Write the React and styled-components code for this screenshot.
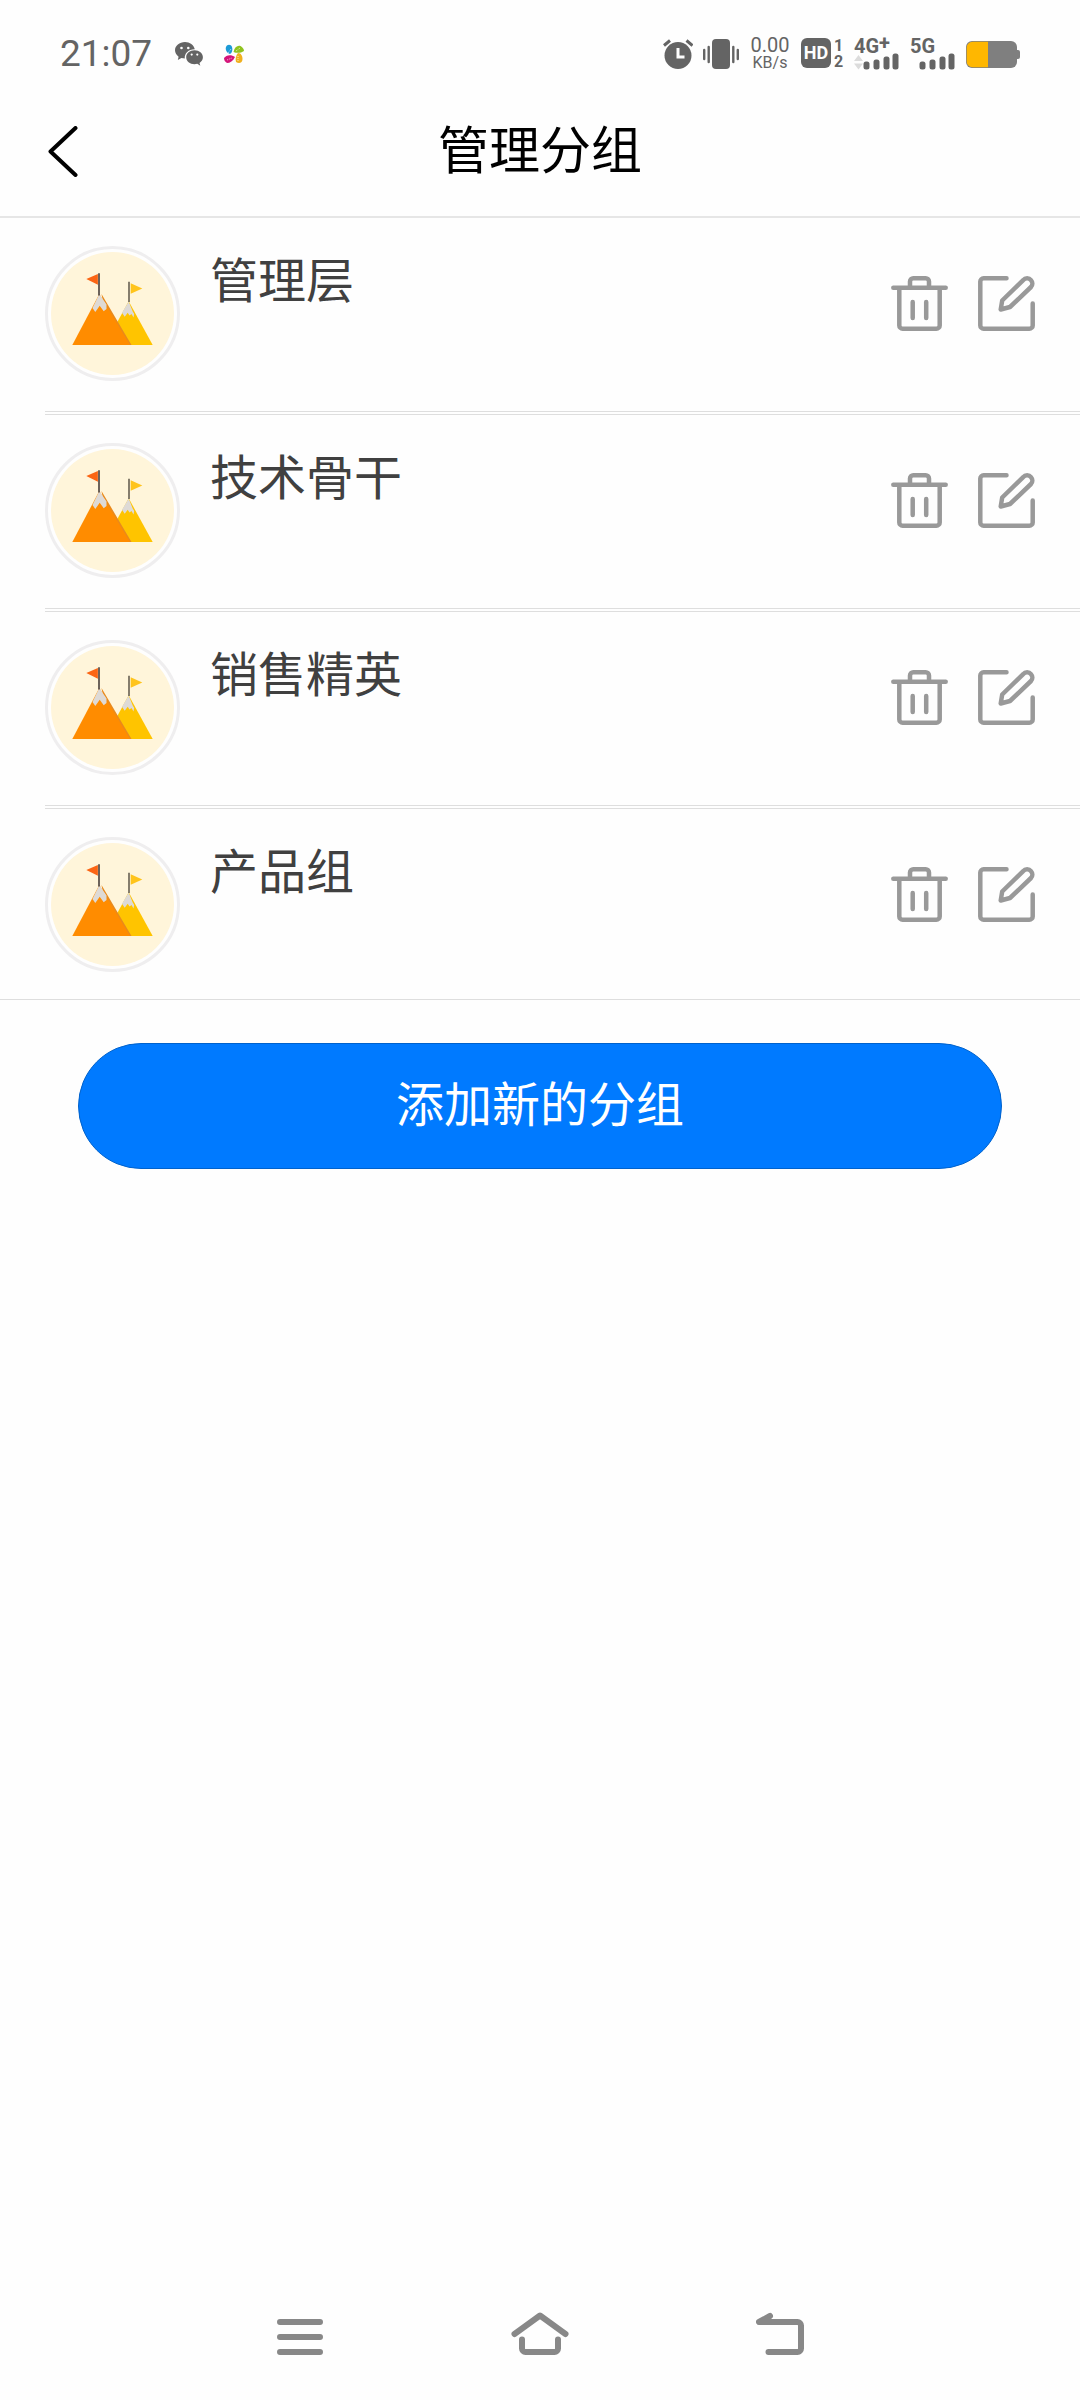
import { useState } from 'react'
import styled, { createGlobalStyle } from 'styled-components'

const GlobalStyle = createGlobalStyle`
  * { box-sizing: border-box; }
  body {
    margin: 0;
    background: #fefefe;
    font-family: "Noto Sans CJK SC", sans-serif;
  }
  button {
    padding: 0;
    border: none;
    background: none;
    font: inherit;
    cursor: pointer;
  }
  svg { display: block; }
`;

const initialGroups = ['管理层', '技术骨干', '销售精英', '产品组']

function WechatIcon() {
    return (
        <svg width="28" height="24" viewBox="0 0 28 24" fill="#646464">
            <path d="M10 0C4.400 0 0 3.700 0 8.300c0 2.600 1.400 4.800 3.600 6.400L2.800 18l3.600-1.900c1.200.3 2.200.5 3.400.5C9.200 11 14 7 19.800 7.200 18.800 3 14.800 0 10 0z" />
            <path d="M19.500 8.200c-4.700 0-8.300 3.100-8.300 7 0 4 3.600 7 8.300 7 1 0 1.900-.1 2.800-.4l3 1.900-.8-2.800c2.100-1.300 3.400-3.400 3.400-5.700 0-3.900-3.700-7-8.400-7z" />
            <g fill="#fefefe">
                <circle cx="6.500" cy="6" r="1.300" />
                <circle cx="13.300" cy="6" r="1.300" />
                <circle cx="16.700" cy="12.600" r="1.100" />
                <circle cx="22.300" cy="12.600" r="1.100" />
            </g>
        </svg>
    )
}

function PetalsIcon() {
    return (
        <svg width="20" height="20" viewBox="0 0 20 20">
            <path d="M2 3c1-3 5-3 6 0 1 3 0 6-2 7-3-1-5-4-4-7z" fill="#1c9ad6" />
            <path d="M9.500 8c1-5 4-7 7-6 2 1 3.500 3 3.500 5-3 2-7 2.500-10.500 1z" fill="#8fc31f" />
            <path d="M0 14c2-3 7-4 11-1-2 4-5 6-8 6-2-1-3-3-3-5z" fill="#d4147a" />
            <path d="M14 9c3 0 4.500 3 4.500 6 0 4-3.500 5-6.500 3-1-3 0-7 2-9z" fill="#f0b01e" />
            <path d="M4 9l3-4M12 7l4-3M3 16l5-2M14 17l0-5" stroke="#fff" strokeWidth="0.700" strokeDasharray="1 1" />
        </svg>
    )
}

function AlarmIcon() {
    return (
        <svg width="30" height="30" viewBox="0 0 30 30">
            <circle cx="15" cy="16.500" r="13.500" fill="#646464" />
            <path d="M1 6.500L7 1.500M23.500 1.500l6 5" stroke="#646464" strokeWidth="3" />
            <path d="M15 9v9h6.500" fill="none" stroke="#fefefe" strokeWidth="3" />
        </svg>
    )
}

function VibrateIcon() {
    return (
        <svg width="36" height="30" viewBox="0 0 36 30">
            <rect x="9" width="18" height="30" rx="4" fill="#646464" />
            <path d="M1.200 11v9M5.700 8v15M30.300 8v15M34.800 11v9" stroke="#646464" strokeWidth="2.400" strokeLinecap="round" />
        </svg>
    )
}

function SignalBars({ arrows }) {
    return (
        <svg width="46" height="17" viewBox="0 0 46 17" fill="#646464">
            {arrows && <path d="M0 8l4.500-6L9 8zM0 10.500h9l-4.500 6z" fill="#dcdcdc" />}
            <rect x="9.500" y="8.500" width="6" height="8" rx="2.500" />
            <rect x="19.500" y="6.500" width="6" height="10" rx="2.500" />
            <rect x="29.500" y="3.500" width="6" height="13" rx="2.500" />
            <rect x="38.500" y="0.500" width="6" height="16" rx="2.500" />
        </svg>
    )
}

function BatteryIcon() {
    return (
        <svg width="54" height="27" viewBox="0 0 54 27">
            <rect width="51" height="27" rx="6" fill="#7f7f7f" />
            <path d="M51 9h1a2 2 0 0 1 2 2v5a2 2 0 0 1-2 2h-1z" fill="#7f7f7f" />
            <path d="M22 .7H6.500A5.800 5.800 0 0 0 .7 6.500v14a5.800 5.800 0 0 0 5.800 5.800H22z" fill="#ffb700" />
        </svg>
    )
}

function MountainIcon() {
    return (
        <svg width="123" height="123" viewBox="0 0 123 123">
            <path d="M77.700 49.300L101.700 93h-48z" fill="#ffc400" />
            <path d="M77.700 49.500L71 60.700l2.700 4 3-4 1.800 2.800 2 -1.500 2 3.500.7-3.500-1.500-2.500z" fill="#dedad6" />
            <path d="M50.500 42l30 51H60z" fill="#e98a1c" />
            <path d="M48.300 42L21.300 93H79z" fill="#ff8c00" />
            <path d="M48.300 42L41.500 56l2.800 4 4.400-6.300 4 5.600 2.800-2.300V52.500z" fill="#dedad6" />
            <path d="M48 43.500V21.300" stroke="#3b3230" strokeWidth="1.500" />
            <path d="M78 50V29.700" stroke="#5c5448" strokeWidth="1.500" />
            <path d="M46.900 22v10.700L35.300 27z" fill="#fb6514" />
            <path d="M79.700 31.300v10.400l11.600-5.200z" fill="#ffc41c" />
        </svg>
    )
}

function TrashIcon() {
    return (
        <svg width="57" height="55" viewBox="0 0 57 55" fill="none" stroke="#999" strokeWidth="4.500" strokeLinecap="round" strokeLinejoin="round">
            <path d="M2.300 11.800h52.400M19 11V5.500A3.300 3.300 0 0 1 22.300 2.300h12.400A3.300 3.300 0 0 1 38 5.500V11M8.300 12.500v36.900a3.300 3.300 0 0 0 3.300 3.300h33.800a3.300 3.300 0 0 0 3.300-3.300V12.500M21.700 26v16M35.200 26v16" />
        </svg>
    )
}

function EditIcon() {
    return (
        <svg width="57" height="55" viewBox="0 0 57 55" fill="none" stroke="#999" strokeWidth="4.500" strokeLinecap="round" strokeLinejoin="round">
            <path d="M28.500 2.300H5.600a3.300 3.300 0 0 0-3.300 3.300v43.800a3.300 3.300 0 0 0 3.300 3.300h45.800a3.300 3.300 0 0 0 3.300-3.300V27.500" />
            <path d="M22.700 33.500L24.200 24.500 45.200 4.200a5 5 0 0 1 7.800 0 5 5 0 0 1 0 6.800L32 31z" />
        </svg>
    )
}

export default function App() {
    const [groups, setGroups] = useState(initialGroups)

    function removeGroup(name) {
        setGroups(groups.filter(group => group !== name))
    }

    return (
        <Page>
            <GlobalStyle />
            <StatusBar>
                <Time>21:07</Time>
                <Notifications>
                    <WechatIcon />
                    <PetalsIcon />
                </Notifications>
                <StatusIcons>
                    <AlarmIcon />
                    <VibrateIcon />
                    <Speed>
                        <SpeedValue>0.00</SpeedValue>
                        <SpeedUnit>KB/s</SpeedUnit>
                    </Speed>
                    <Volte>
                        <HdBadge>HD</HdBadge>
                        <SimNumbers>
                            <span>1</span>
                            <span>2</span>
                        </SimNumbers>
                    </Volte>
                    <Network>
                        <NetworkType>4G<Plus>+</Plus></NetworkType>
                        <SignalBars arrows />
                    </Network>
                    <Network>
                        <NetworkType>5G</NetworkType>
                        <SignalBars />
                    </Network>
                    <BatteryIcon />
                </StatusIcons>
            </StatusBar>
            <Header>
                <BackButton aria-label="返回">
                    <svg width="30" height="51" viewBox="0 0 30 51" fill="none" stroke="#000" strokeWidth="4" strokeLinecap="round" strokeLinejoin="round">
                        <path d="M27.500 2L2.500 25.500l25 23.500" />
                    </svg>
                </BackButton>
                <Title>管理分组</Title>
            </Header>
            <Main>
                <GroupList>
                    {groups.map(name => (
                        <GroupRow key={name}>
                            <Avatar><MountainIcon /></Avatar>
                            <GroupName>{name}</GroupName>
                            <Actions>
                                <button aria-label={`删除${name}`} onClick={() => removeGroup(name)}><TrashIcon /></button>
                                <button aria-label={`编辑${name}`}><EditIcon /></button>
                            </Actions>
                        </GroupRow>
                    ))}
                </GroupList>
                <ButtonContainer>
                    <AddButton>添加新的分组</AddButton>
                </ButtonContainer>
            </Main>
            <NavBar>
                <NavButton aria-label="最近任务">
                    <svg width="46" height="44" viewBox="0 0 46 44">
                        <path d="M3 10h40M3 25h40M3 40h40" />
                    </svg>
                </NavButton>
                <NavButton aria-label="主页">
                    <svg width="58" height="44" viewBox="0 0 58 44">
                        <path d="M3.500 22L29 3.500 54.500 22M11 27.500v9a3.500 3.500 0 0 0 3.500 3.500h29a3.500 3.500 0 0 0 3.500-3.500v-9" />
                    </svg>
                </NavButton>
                <NavButton aria-label="返回上一页">
                    <svg width="48" height="44" viewBox="0 0 48 44">
                        <path d="M14 4L3 10h38.500A3.500 3.500 0 0 1 45 13.500v23a3.500 3.500 0 0 1-3.500 3.500H12.500" />
                    </svg>
                </NavButton>
            </NavBar>
        </Page>
    )
}

const Page = styled.div`
  display: flex;
  flex-direction: column;
  min-height: 100vh;
`;

const StatusBar = styled.div`
  display: flex;
  align-items: center;
  height: 82px;
  padding: 26px 60px 0;
  color: #646464;
  font-family: Roboto, sans-serif;
`;

const Time = styled.span`
  font-size: 37px;
  line-height: 40px;
`;

const Notifications = styled.div`
  display: flex;
  align-items: center;
  gap: 21px;
  margin-left: 23px;
`;

const StatusIcons = styled.div`
  display: flex;
  align-items: center;
  gap: 10px;
  margin-left: auto;
`;

const Speed = styled.div`
  display: flex;
  flex-direction: column;
  align-items: center;
  width: 42px;
`;

const SpeedValue = styled.span`
  font-size: 20px;
  line-height: 17px;
`;

const SpeedUnit = styled.span`
  font-size: 16px;
  line-height: 18px;
`;

const Volte = styled.div`
  display: flex;
  gap: 2px;
`;

const HdBadge = styled.span`
  width: 30px;
  height: 30px;
  border-radius: 6px;
  background: #646464;
  color: #fefefe;
  font-size: 18px;
  font-weight: 700;
  line-height: 30px;
  text-align: center;
`;

const SimNumbers = styled.span`
  display: flex;
  flex-direction: column;
  width: 11px;
  font-size: 16px;
  font-weight: 700;
  line-height: 16px;
  text-align: center;
`;

const Network = styled.div`
  display: flex;
  flex-direction: column;
  width: 46px;
`;

const NetworkType = styled.span`
  display: flex;
  height: 14px;
  font-size: 20px;
  font-weight: 700;
  line-height: 14px;
`;

const Plus = styled.span`
  line-height: 8px;
`;

const Header = styled.header`
  display: grid;
  grid-template-columns: 1fr auto 1fr;
  align-items: center;
  height: 136px;
  padding: 0 48px;
  border-bottom: 2px solid #e6e6e6;
`;

const BackButton = styled.button`
  justify-self: start;
  margin-top: 4px;
`;

const Title = styled.h1`
  margin: 0 0 4px;
  color: #000;
  font-size: 51px;
  font-weight: 400;
  line-height: 72px;
`;

const Main = styled.main`
  flex: 1;
`;

const GroupList = styled.ul`
  margin: 0;
  padding: 0;
  border-bottom: 1px solid #dedede;
  list-style: none;
`;

const GroupRow = styled.li`
  display: flex;
  align-items: flex-start;
  margin-left: 45px;
  padding: 28px 45px 30px 0;
  border-bottom: 4px double #dedede;

  &:last-child {
    padding-bottom: 27px;
    border-bottom: none;
  }
`;

const Avatar = styled.div`
  flex: none;
  width: 135px;
  height: 135px;
  padding: 3px;
  border: 3px solid #efeeef;
  border-radius: 50%;

  svg {
    border-radius: 50%;
    background: #fff5da;
  }
`;

const GroupName = styled.span`
  flex: 1;
  margin-left: 30px;
  color: #404040;
  font-size: 48px;
  line-height: 62px;
`;

const Actions = styled.div`
  display: flex;
  gap: 30px;
  margin-top: 30px;
`;

const ButtonContainer = styled.div`
  padding: 43px 78px;
`;

const AddButton = styled.button`
  && {
    width: 100%;
    height: 126px;
    padding-bottom: 10px;
    border: 1px solid #0062cc;
    border-radius: 63px;
    background: #007aff;
    color: #fff;
    font-size: 48px;
  }
`;

const NavBar = styled.nav`
  display: grid;
  grid-template-columns: repeat(3, 240px);
  justify-content: center;
  height: 132px;
`;

const NavButton = styled.button`
  display: flex;
  align-items: center;
  justify-content: center;

  path {
    fill: none;
    stroke: #888;
    stroke-width: 6;
    stroke-linecap: round;
    stroke-linejoin: round;
  }
`;
